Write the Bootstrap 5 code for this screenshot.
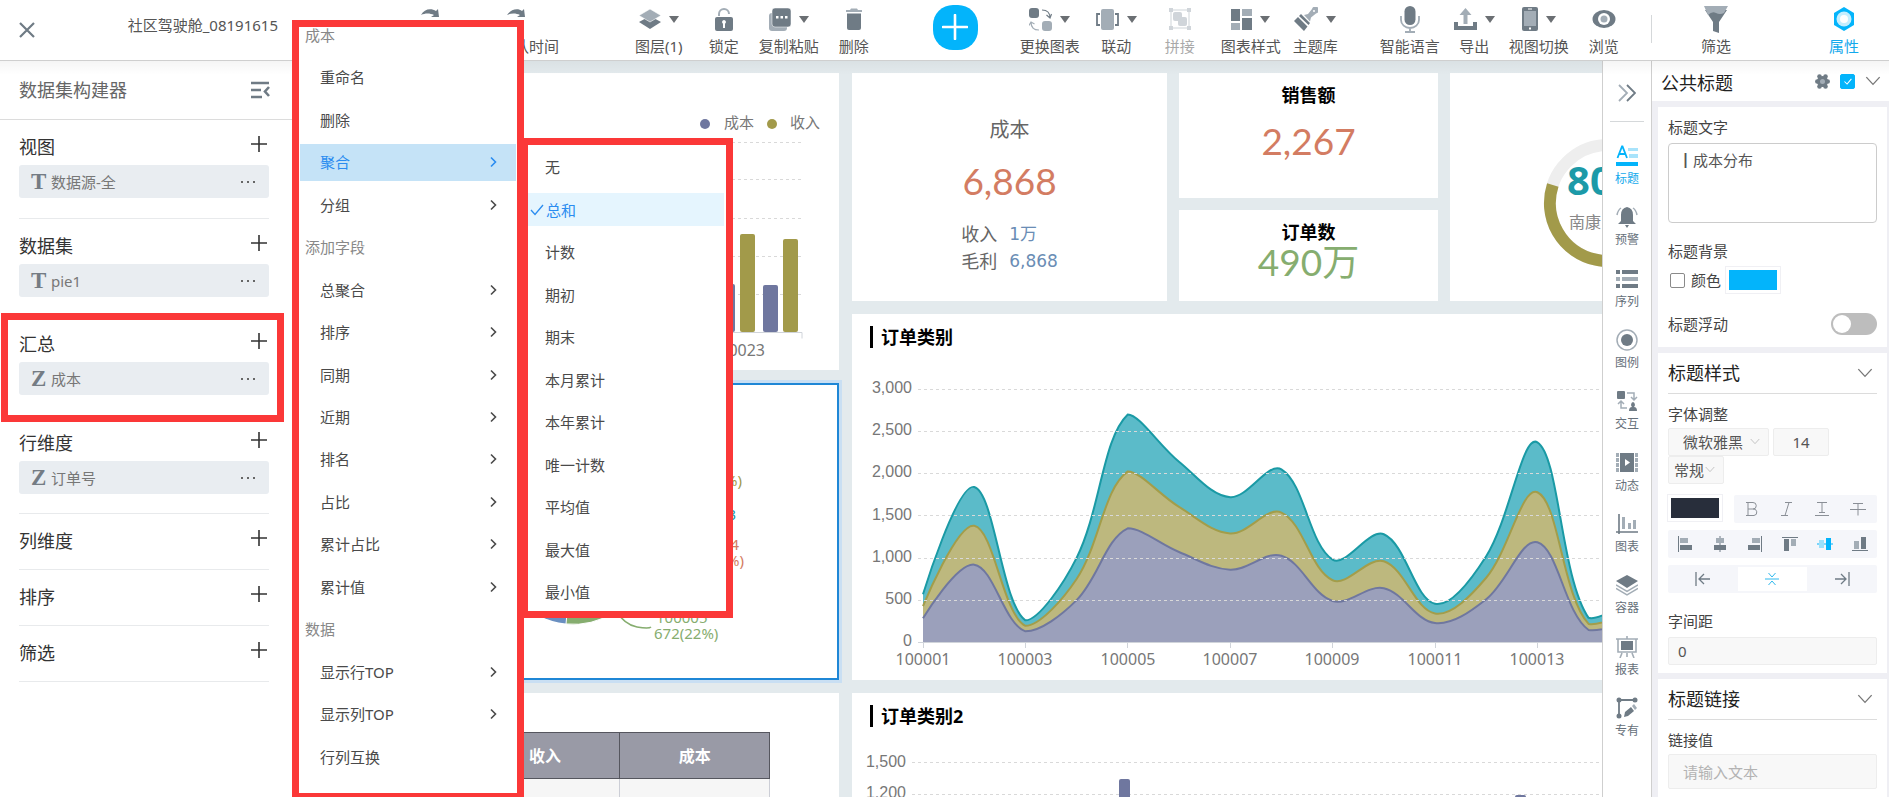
<!DOCTYPE html>
<html lang="zh-CN">
<head>
<meta charset="utf-8">
<meta name="viewport" content="width=device-width, initial-scale=1">
<title>社区驾驶舱_08191615</title>
<link href="https://cdn.jsdelivr.net/npm/bootstrap@5.3.0/dist/css/bootstrap.min.css" rel="stylesheet">
<style>
:root{--dk:#6f7b85;--lt:#a3adb6;--sky:#03b4fb;--red:#fb3838}
body{font:15px/20px "Noto Sans","Noto Sans CJK SC",sans-serif;color:#555;background:#fff;min-width:1200px}
svg{display:block;flex:none}
svg text{font-family:"Noto Sans","Noto Sans CJK SC",sans-serif}
.d{fill:var(--dk)}.l{fill:var(--lt)}
.ds{stroke:var(--dk);fill:none}.ls{stroke:var(--lt);fill:none}
/* top bar */
.topbar{border-bottom:1px solid #cfcfcf;background:#fff}
.brand-box{width:292px;padding:0 14px 0 19px}
.brand-name{padding-bottom:11px}
.plain{border:0;background:none;padding:0;color:inherit;font:inherit;line-height:inherit}
.tool{height:60px;padding-top:3px;min-width:30px;color:#555;white-space:nowrap}
.tool .pic{height:24px;gap:8px;margin-bottom:5px}
.caret{width:0;height:0;border:5px solid transparent;border-top:7px solid #6b6f73;border-bottom:0}
.w40{min-width:40px}
.sp12{margin-left:12px}.sp14{margin-left:14px}.sp16{margin-left:16px}.sp20{margin-left:20px}.sp26{margin-left:26px}.sp28{margin-left:28px}.sp42{margin-left:42px}.sp54{margin-left:54px}.sp64{margin-left:64px}.sp76{margin-left:76px}.sp123{margin-left:123px}
.add{width:45px;height:45px;border-radius:20px;background:var(--sky);margin-bottom:6px}
.side-tools{width:238px;padding:0 30px 0 50px}
.side-tools::before{content:"";position:absolute;left:0;top:15px;height:28px;border-left:1px solid #d5d8da}
.workspace{min-height:0}
.workspace::after{content:"";position:absolute;left:0;right:0;top:0;height:14px;background:linear-gradient(rgba(0,0,0,.04),transparent);pointer-events:none}
/* dataset builder */
.builder{width:292px;color:#333}
.builder-head{height:59px;border-bottom:1px solid #dcdcdc;padding:0 22px 0 19px;font-size:18px;color:#666}
.builder-list{padding:0 23px 0 19px}
.block{border-bottom:1px solid #e8eaec;min-height:56px}
.block .plain{padding:2px 1px 0 0}
.block.filled{min-height:98px}
.block.filled:nth-child(odd){min-height:99px}
.block h3{font-size:18px;line-height:36px;padding-top:9px;margin:0;font-weight:400;color:#333}
.chip{height:33px;background:#e9edf1;border-radius:3px;padding:0 14px 0 12px;color:#777}
.chip b{font:bold 23px/30px "Liberation Serif",serif;width:20px;color:#747c84}
.frame-sum{position:absolute;left:1px;top:313px;width:283px;height:109px;border:7px solid var(--red);pointer-events:none}
/* menus */
.menu{position:absolute;background:#fff;border:7px solid var(--red);list-style:none;margin:0;color:#4a4a4a}
.menu-main{left:292px;top:20px;bottom:0;width:232px;padding:0 1px 15px;border-bottom-width:4px;z-index:3}
.menu-main li{flex:1 1 0;min-height:0}
.menu-main li:first-child{flex:0 0 29px;align-items:flex-start!important}
.menu-main li:first-child span{line-height:16px}
.menu-main span{padding-left:5px;color:#888}
.menu-main button{height:37px;padding:0 19px 0 20px}
.menu-main .on{background:#c5e3f7;color:#2a8cf0}
.menu-sub{left:521px;top:138px;width:212px;height:480px;padding:1px 2px 0 0;z-index:2}
.menu-sub li{height:42px}
.menu-sub li:nth-child(even){height:43px}
.menu-sub button{height:33px;padding-left:17px}
.menu-sub .on{background:#e5f5fe;color:#2a8cf0;padding-left:2px}
/* dashboard */
.canvas{background:#e3eaed;padding:12px 0 0 12px;min-width:0}
.board{display:grid;grid-template-columns:535px 914px;gap:13px;height:100%}
.board-col{display:grid;gap:13px}
.board-left{grid-template-rows:297px 297px minmax(300px,1fr)}
.board-right{grid-template-rows:228px 366px minmax(300px,1fr)}
.tile{background:#fff}
.picked{box-shadow:inset 0 0 0 2px #1f87d6,0 0 0 3px #c9dff3}
.kpis{display:grid;grid-template-columns:315px 259px 1fr;gap:12px;grid-template-rows:125px 91px}
.kpis .tall{grid-row:span 2}
.tile-title{font-size:18px;line-height:20px;font-weight:700;color:#000;margin:0;padding-top:12px}
.big{font:37px/40px Lato,"Noto Sans CJK SC",sans-serif}
.c-red{color:#d37c62}.c-green{color:#86ad6f}.c-blue{color:#6a8db5}
.kpi-name{font-size:20px;line-height:30px;color:#666;margin-top:42px}
.kpi-list{font-size:18px;line-height:27px;color:#666;display:grid;grid-template-columns:auto auto;gap:0 12px;margin:20px 0 0}
.kpi-list dd{font-family:"DejaVu Sans","Noto Sans CJK SC",sans-serif;font-size:17px;margin:0}
.kpi-list dt{font-weight:400}
.bar-title{height:46px;padding-left:18px}
.bar-title h2{border-left:3px solid #000;padding-left:8px;font-size:18px;line-height:22px;font-weight:700;color:#000;margin:0}
.gl{stroke:#d9d9d9;stroke-dasharray:3 3}
.ax{stroke:#d0d4da}
.yl text{font:16px "Liberation Sans",sans-serif;fill:#777;text-anchor:end}
.xl text{font-size:16px;fill:#777;text-anchor:middle}
.grid-table{margin:39px 0 0 16px;border-collapse:collapse;width:450px;table-layout:fixed}
.grid-table th{background:#999aa6;border:1px solid #55565e;color:#fff;font-size:16px;height:46px;text-align:center}
.grid-table td{background:#f6f6f6;border:1px solid #ccced6;height:46px}
/* icon rail */
.rail{width:50px;border:1px solid #cfcfcf;border-width:0 1px;background:#fff}
.rail-top{width:34px;border-bottom:1px solid #d5d8da;margin-bottom:23px}
.rail button{height:61px;font-size:12px;line-height:18px;color:#66707a}
.rail button:nth-child(3n){height:62px}
.rail button svg{margin-bottom:3px}
.rail .rail-top svg{margin:4px 0 0}
.rail .on,.tool.on{color:#13a9ec}
/* properties */
.props{width:237px;background:#efeff4;color:#444;overflow:hidden}
.props-head{height:40px;background:#fff;padding:0 8px 0 9px;color:#222;font-size:18px;margin-bottom:6px}
.props-head span{padding-top:4px}
.props-head .tick{margin:0 10px 0 10px}
.pane{background:#fff;margin:0 2px 6px 6px;padding:0 10px}
.pane h3{font-size:18px;font-weight:400;color:#222;margin:0;line-height:40px}
.pane-head{border-bottom:1px solid #dcdcdc;height:41px}
.lab{display:block;line-height:20px;margin:10px 0 4px}
.lab-first{margin:6px 0}
.lab-far{margin:18px 0 6px}
.field{background:#f8f8f8;border:1px solid #ededed;border-radius:2px;font-size:15px;line-height:20px;color:#555;padding:0 9px;width:100%;height:28px}
.field::placeholder{color:#b3b3b3;opacity:1}
.field.tall-field{height:35px;padding-left:14px}
.field.area{background:#fff;border-color:#ccc;border-radius:4px;height:80px;padding:6px 9px;resize:none;display:block}
.picker{position:relative;width:56px}
.picker.font-pick{width:101px}
.picker select{appearance:none;outline:0;padding:0 5px}
.picker.font-pick select{padding-left:14px}
.picker svg{position:absolute;right:9px;top:10px;pointer-events:none}
.field.size-field{width:56px;padding:0}
.swatch{border:3px solid #fff;box-shadow:0 0 0 1px #f0f0f4;padding:0;height:26px;width:54px}
.swatch.sky{background:#03b4fb}
.swatch.ink{background:#282e3b}
.tick{width:15px;height:15px;margin:0 0 0 2px;border:1px solid #8a8a8a;border-radius:2px;appearance:none}
.tick + label{margin:0 5px 0 6px}
.tick.full{background:var(--sky) url("data:image/svg+xml,%3Csvg xmlns='http://www.w3.org/2000/svg' viewBox='0 0 15 15'%3E%3Cpath d='M4 7.5l3 3 5-6' fill='none' stroke='%23fff' stroke-width='1.2'/%3E%3C/svg%3E");border-color:var(--sky)}
.toggle{appearance:none;width:46px;height:22px;border-radius:11px;background:#bdbdbd;margin:0}
.toggle::before{content:"";display:block;width:18px;height:18px;border-radius:9px;background:#fff;margin:2px}
.strip{background:#f5f6fa;border-radius:2px;height:28px;margin-top:7px}
.strip .mid{background:#fff;height:24px}
.strip.style-strip{width:143px;margin:0}
.style-row{margin-top:11px}
</style>
</head>
<body class="vh-100 d-flex flex-column overflow-hidden position-relative">
<svg width="0" height="0" class="position-absolute" aria-hidden="true">
  <symbol id="plus" viewBox="0 0 18 18"><path d="M9 1v16M1 9h16" stroke="#333" stroke-width="1.6" fill="none"/></symbol>
  <symbol id="dots" viewBox="0 0 14 4"><path d="M0 1h2v2H0zM6 1h2v2H6zM12 1h2v2h-2z" fill="#666"/></symbol>
  <symbol id="gt" viewBox="0 0 7 12"><path d="M1 1.500l4.500 4.500L1 10.500" stroke="currentColor" stroke-width="1.600" fill="none"/></symbol>
  <symbol id="down" viewBox="0 0 14 9"><path d="M1 1l6 6.500L13 1" stroke="currentColor" stroke-width="1.200" fill="none"/></symbol>
</svg>

<header class="topbar d-flex align-items-stretch flex-shrink-0">
  <div class="brand-box d-flex align-items-center justify-content-between flex-shrink-0">
    <button class="plain" aria-label="关闭"><svg width="16" height="16"><path class="ds" stroke-width="2.200" d="M1 1l14 14M15 1L1 15"/></svg></button>
    <div class="brand-name">社区驾驶舱_08191615</div>
  </div>
  <nav class="d-flex flex-fill align-items-center" aria-label="工具栏">
    <button class="plain tool sp123"><span class="pic d-flex justify-content-center"><svg width="20" height="20"><path class="d" d="M1 8C4 2 11 1 16 4l2-2 1 8-8 0 3-2C10 6 5 6 1 8z"/></svg></span>撤销</button>
    <button class="plain tool sp54"><span class="pic d-flex ps-2"><svg width="20" height="20"><path class="d" d="M0 8C4 2 11 1 15 4l2-2 1 8-8 0 3-2C9 6 4 6 0 8z"/></svg></span>默认时间</button>
    <button class="plain tool sp76"><span class="pic d-flex justify-content-center align-items-center"><svg width="22" height="22"><path class="d" d="M0 14l11-6 11 6-11 7z"/><path class="l" stroke="#fff" stroke-width=".6" d="M0 7.500L11 1l11 6.500-11 6.500z"/></svg><i class="caret"></i></span>图层(1)</button>
    <button class="plain tool sp26"><span class="pic d-flex justify-content-center align-items-center"><svg width="20" height="23"><path class="ls" stroke-width="2" d="M5 8V6a5 5 0 0 1 10 0"/><rect class="d" y="9" x="1" width="18" height="14" rx="2"/><path fill="#fff" d="M10 12a2 2 0 0 1 1 3.700V20H9v-4.300A2 2 0 0 1 10 12z"/></svg></span>锁定</button>
    <button class="plain tool sp20"><span class="pic d-flex justify-content-center align-items-center"><svg width="22" height="23"><rect class="l" y="5" width="18" height="18" rx="3"/><rect class="d" x="3" width="19" height="19" rx="3" stroke="#fff" stroke-width=".5"/><path fill="#fff" d="M7 8h2.500v2.500H7zM11.500 8H14v2.500h-2.500zM16 8h2.500v2.500H16z"/></svg><i class="caret"></i></span>复制粘贴</button>
    <button class="plain tool sp20"><span class="pic d-flex justify-content-center align-items-center"><svg width="18" height="23"><path class="l" d="M1 2h4l1-1.500h6L13 2h4v2H1z"/><path class="d" d="M2 5.500h14V20q0 2-2 2H4q-2 0-2-2z"/></svg></span>删除</button>
    <button class="plain add sp64 d-flex align-items-center justify-content-center" aria-label="添加"><svg width="26" height="26"><path d="M13 1v24M1 13h24" stroke="#fff" stroke-width="2.600" stroke-linecap="round"/></svg></button>
    <button class="plain tool sp42"><span class="pic d-flex justify-content-center align-items-center"><svg width="23" height="23"><rect class="d" width="10" height="10" rx="3"/><rect class="l" x="13" y="13" width="10" height="10" rx="3"/><path class="ds" stroke-width="1.200" d="M13 2q8 0 8 8M17.500 7l3.500 3 1.500-4"/><path class="ls" stroke-width="1.200" d="M10 22q-8 0-8-8M0 17.500l2-3.500L5.500 16"/></svg><i class="caret"></i></span>更换图表</button>
    <button class="plain tool w40 sp16"><span class="pic d-flex justify-content-center align-items-center"><svg width="23" height="23"><rect class="l" x="5" y="1" width="13" height="21" rx="2"/><path class="ds" stroke-width="1.800" d="M4 6H1v11h3M19 6h3v11h-3"/></svg><i class="caret"></i></span>联动</button>
    <button class="plain tool sp28 opacity-50" disabled><span class="pic d-flex justify-content-center align-items-center"><svg width="22" height="22"><path class="ls" d="M2 2h18v18H2z"/><path class="l" d="M0 0h4v4H0zM18 0h4v4h-4zM0 18h4v4H0zM18 18h4v4h-4z"/><rect class="l" x="4" y="4" width="9" height="9" rx="2"/><rect class="l" x="9" y="9" width="9" height="9" rx="2"/></svg></span>拼接</button>
    <button class="plain tool sp26"><span class="pic d-flex justify-content-center align-items-center"><svg width="21" height="21"><path class="d" d="M0 0h9v12H0zM11 9h10v12H11z"/><path class="l" d="M11 0h10v7H11zM0 14h9v7H0z"/></svg><i class="caret"></i></span>图表样式</button>
    <button class="plain tool w40 sp12"><span class="pic d-flex justify-content-center align-items-center"><svg width="24" height="24"><path class="l" d="M10 8l4-1 4-5a3.500 3.500 0 1 1 4 4.500l-5 4-1 4z"/><path class="d" d="M7 7l9 9-1.500 2L5 9zM4 10l9.500 9.500L10 24 0 14z"/><circle cx="20" cy="4" r="1" fill="#fff"/></svg><i class="caret"></i></span>主题库</button>
    <button class="plain tool sp42"><span class="pic d-flex justify-content-center align-items-center"><svg width="20" height="27"><rect class="d" x="4.500" width="11" height="19" rx="5.500"/><path class="ls" stroke-width="1.800" d="M1 10v4a9 8 0 0 0 18 0v-4M10 22v4M5 26h10"/></svg></span>智能语言</button>
    <button class="plain tool w40 sp14"><span class="pic d-flex justify-content-center align-items-center"><svg width="23" height="22"><path class="l" d="M11.500 0l6 7h-4v9h-4V7h-4z"/><path class="d" d="M0 14h4v4h15v-4h4v8H0z"/></svg><i class="caret"></i></span>导出</button>
    <button class="plain tool sp14"><span class="pic d-flex justify-content-center align-items-center"><svg width="16" height="24"><rect class="d" width="16" height="24" rx="2"/><path class="l" d="M2 4h12v15H2z"/><path fill="#fff" d="M6 1.500h4v1H6zM7 20.500h2v2H7z"/></svg><i class="caret"></i></span>视图切换</button>
    <button class="plain tool sp20"><span class="pic d-flex justify-content-center align-items-center"><svg width="24" height="20"><ellipse class="d" cx="12" cy="10" rx="11.500" ry="9"/><circle cx="12" cy="10" r="6" fill="#fff"/><circle class="l" cx="12" cy="10" r="3.500"/></svg></span>浏览</button>
  </nav>
  <div class="side-tools d-flex justify-content-between align-items-center position-relative flex-shrink-0">
    <button class="plain tool"><span class="pic d-flex justify-content-center align-items-center"><svg width="24" height="27"><path class="d" d="M1 4l8 12v9l6 2V16l8-12z"/><path class="l" d="M0 0h24l-4 7q-4 2-8 0t-8 2z"/></svg></span>筛选</button>
    <button class="plain tool on"><span class="pic d-flex justify-content-center align-items-center"><svg width="22" height="24"><path fill="#03b4fb" d="M11 0l10 6v12l-10 6-10-6V6z"/><circle cx="11" cy="12" r="7.500" fill="#c5eefe"/><circle cx="11" cy="12" r="4" fill="#fff"/></svg></span>属性</button>
  </div>
</header>

<div class="workspace d-flex flex-fill position-relative">
  <aside class="builder flex-shrink-0">
    <div class="builder-head d-flex align-items-center justify-content-between">数据集构建器
      <button class="plain" aria-label="收起"><svg width="19" height="18"><path class="ds" stroke-width="2.600" d="M0 2h18M0 9h10M0 16h11M18 6l-4 4.500 4 4.500"/></svg></button></div>
    <div class="builder-list">
      <section class="block filled"><div class="d-flex justify-content-between align-items-center"><h3>视图</h3><button class="plain" aria-label="添加视图"><svg width="18" height="18"><use href="#plus"/></svg></button></div><div class="chip d-flex align-items-center"><b>T</b><span class="flex-fill">数据源-全</span><svg width="14" height="4"><use href="#dots"/></svg></div></section>
      <section class="block filled"><div class="d-flex justify-content-between align-items-center"><h3>数据集</h3><button class="plain" aria-label="添加数据集"><svg width="18" height="18"><use href="#plus"/></svg></button></div><div class="chip d-flex align-items-center"><b>T</b><span class="flex-fill">pie1</span><svg width="14" height="4"><use href="#dots"/></svg></div></section>
      <section class="block filled"><div class="d-flex justify-content-between align-items-center"><h3>汇总</h3><button class="plain" aria-label="添加汇总"><svg width="18" height="18"><use href="#plus"/></svg></button></div><div class="chip d-flex align-items-center"><b>Z</b><span class="flex-fill">成本</span><svg width="14" height="4"><use href="#dots"/></svg></div></section>
      <section class="block filled"><div class="d-flex justify-content-between align-items-center"><h3>行维度</h3><button class="plain" aria-label="添加行维度"><svg width="18" height="18"><use href="#plus"/></svg></button></div><div class="chip d-flex align-items-center"><b>Z</b><span class="flex-fill">订单号</span><svg width="14" height="4"><use href="#dots"/></svg></div></section>
      <section class="block"><div class="d-flex justify-content-between align-items-center"><h3>列维度</h3><button class="plain" aria-label="添加列维度"><svg width="18" height="18"><use href="#plus"/></svg></button></div></section>
      <section class="block"><div class="d-flex justify-content-between align-items-center"><h3>排序</h3><button class="plain" aria-label="添加排序"><svg width="18" height="18"><use href="#plus"/></svg></button></div></section>
      <section class="block"><div class="d-flex justify-content-between align-items-center"><h3>筛选</h3><button class="plain" aria-label="添加筛选"><svg width="18" height="18"><use href="#plus"/></svg></button></div></section>
    </div>
  </aside>

  <main class="canvas flex-fill overflow-hidden">
    <div class="board">
      <div class="board-col board-left">
        <div class="tile">
          <svg width="535" height="297" role="img" aria-label="成本与收入柱状图">
            <circle cx="401" cy="51" r="5" fill="#6f779f"/><circle cx="468" cy="51" r="5" fill="#a29a4a"/>
            <g font-size="15" fill="#777"><text x="420" y="55">成本</text><text x="486" y="55">收入</text></g>
            <path class="gl" d="M20 69.500h478M20 106.500h478M20 145.500h478M20 183.500h478M20 221.500h478"/>
            <path class="ax" fill="none" d="M20 259.500h478v6"/>
            <g fill="#6f779f"><rect x="416" y="211" width="15" height="48" rx="2"/><rect x="459" y="212" width="15" height="47" rx="2"/></g>
            <g fill="#a29a4a"><rect x="436" y="161" width="15" height="98" rx="2"/><rect x="479" y="166" width="15" height="93" rx="2"/></g>
            <text x="461" y="283" font-size="16" fill="#777" text-anchor="end">100023</text>
          </svg>
        </div>
        <div class="tile picked">
          <svg width="535" height="297" font-size="15" role="img" aria-label="成本分布饼图">
            <circle cx="269" cy="167" r="74" fill="#6a8fc0"/><path fill="#86ad6f" stroke="#fff" d="M269 167L262 241A74 74 0 0 0 340 190z"/>
            <path d="M311 227q10 15 22 17t14 0" fill="none" stroke="#86ad6f" stroke-width="1.500"/>
            <g text-anchor="end"><text x="438" y="103" fill="#a29a4a">(18%)</text><text x="432" y="137" fill="#1c9aa8">100003</text><text x="435" y="167" fill="#d37c62">100004</text><text x="440" y="183" fill="#d37c62">(16%)</text></g>
            <g fill="#86ad6f"><text x="352" y="240">100005</text><text x="350" y="256">672(22%)</text></g>
          </svg>
        </div>
        <div class="tile overflow-hidden">
          <table class="grid-table"><thead><tr><th>订单号</th><th>收入</th><th>成本</th></tr></thead><tbody><tr><td></td><td></td><td></td></tr></tbody></table>
        </div>
      </div>
      <div class="board-col board-right">
        <div class="kpis">
          <div class="tile tall d-flex flex-column align-items-center">
            <div class="kpi-name">成本</div>
            <div class="big c-red mt-3">6,868</div>
            <dl class="kpi-list"><dt>收入</dt><dd class="c-blue">1万</dd><dt>毛利</dt><dd class="c-blue">6,868</dd></dl>
          </div>
          <div class="tile text-center"><h2 class="tile-title">销售额</h2><div class="big c-red mt-3">2,267</div></div>
          <div class="tile tall">
            <svg width="316" height="228" role="img" aria-label="完成率 80%">
              <circle cx="158" cy="130" r="58" fill="none" stroke="#eee" stroke-width="12"/>
              <path d="M158 72A58 58 0 1 1 102.800 112" fill="none" stroke="#a29a4a" stroke-width="12"/>
              <text x="117" y="122" font-size="40" font-weight="700" fill="#1c9aa8">80%</text>
              <text x="119" y="155" font-size="16" fill="#888">南康</text>
            </svg>
          </div>
          <div class="tile text-center"><h2 class="tile-title">订单数</h2><div class="big c-green">490万</div></div>
        </div>
        <div class="tile">
          <div class="bar-title d-flex align-items-center"><h2>订单类别</h2></div>
          <svg width="914" height="320" role="img" aria-label="订单类别面积图">
            <g id="areas"></g>
            <path class="gl" d="M66 29.500h848M66 71.500h848M66 113.500h848M66 155.500h848M66 198.500h848M66 240.500h848"/>
            <path class="ax" fill="none" d="M66 282.500h848M71.500 282v6M173.500 282v6M275.500 282v6M378.500 282v6M480.500 282v6M583.500 282v6M685.500 282v6"/>
            <g class="yl"><text x="60" y="33">3,000</text><text x="60" y="75">2,500</text><text x="60" y="117">2,000</text><text x="60" y="160">1,500</text><text x="60" y="202">1,000</text><text x="60" y="244">500</text><text x="60" y="286">0</text></g>
            <g class="xl"><text x="71" y="305">100001</text><text x="173" y="305">100003</text><text x="276" y="305">100005</text><text x="378" y="305">100007</text><text x="480" y="305">100009</text><text x="583" y="305">100011</text><text x="685" y="305">100013</text></g>
          </svg>
        </div>
        <div class="tile">
          <div class="bar-title d-flex align-items-center"><h2>订单类别2</h2></div>
          <svg width="914" height="240" role="img" aria-label="订单类别柱状图">
            <path class="gl" d="M60 23.500h854M60 55.500h854"/>
            <g class="yl"><text x="54" y="28">1,500</text><text x="54" y="59">1,200</text></g>
            <g fill="#6f779f"><rect x="267" y="40" width="11" height="200" rx="2"/><rect x="663" y="56" width="11" height="184" rx="2"/></g>
          </svg>
        </div>
      </div>
    </div>
  </main>

  <nav class="rail d-flex flex-column align-items-center flex-shrink-0" aria-label="属性分类">
    <button class="plain rail-top d-flex justify-content-center align-items-center" aria-label="展开"><svg width="18" height="18" stroke-width="1.800"><path class="ls" d="M1 1l8 8-8 8"/><path class="ds" d="M9 1l8 8-8 8"/></svg></button>
    <button class="plain on d-flex flex-column align-items-center"><svg width="22" height="22"><path d="M1.500 13L6 1.500h.500L11 13M3 9h7" fill="none" stroke="#03b4fb" stroke-width="1.800"/><path fill="#a8e3fb" d="M12 3h10v3H12zM13 9h9v4h-9z"/><path fill="#03b4fb" d="M0 17h22v4H0z"/></svg>标题</button>
    <button class="plain d-flex flex-column align-items-center"><svg width="22" height="22"><path class="d" d="M11 1q6 1 6 8v6l3 3H2l3-3V9q0-7 6-8zM9 19h4l-2 3z"/><path class="ls" stroke-width="1.500" d="M5 2Q2 4 1 9M17 2q3 2 4 7"/></svg>预警</button>
    <button class="plain d-flex flex-column align-items-center"><svg width="22" height="22"><path class="d" d="M0 2h4v4H0zM6 2h16v4H6zM0 16h4v4H0zM6 16h16v4H6z"/><path class="l" d="M0 9h4v4H0zM6 9h16v4H6z"/></svg>序列</button>
    <button class="plain d-flex flex-column align-items-center"><svg width="22" height="22"><circle class="ls" stroke-width="1.500" cx="11" cy="11" r="10"/><circle class="d" cx="11" cy="11" r="6"/></svg>图例</button>
    <button class="plain d-flex flex-column align-items-center"><svg width="22" height="22"><rect class="d" x="1" y="1" width="8" height="8" rx="1"/><path class="ls" stroke-width="1.500" d="M11 3h7v6M15 7l3 3 3-3M11 18H5v-6M2 14l3-3 3 3"/><path class="d" d="M17 12a3 3 0 0 1 1 5q3 0 3 4h-8q0-4 3-4a3 3 0 0 1 1-5z"/></svg>交互</button>
    <button class="plain d-flex flex-column align-items-center"><svg width="22" height="22"><path class="l" d="M0 1h3v4H0zM0 6h3v4H0zM0 11h3v4H0zM0 16h3v4H0zM19 1h3v4h-3zM19 6h3v4h-3zM19 11h3v4h-3zM19 16h3v4h-3z"/><path class="d" d="M4 1h14v19H4z"/><path fill="#fff" d="M9 7l5 3.500L9 14z"/></svg>动态</button>
    <button class="plain d-flex flex-column align-items-center"><svg width="22" height="22"><path class="ds" stroke-width="1.600" d="M3 1v20M0 19h22"/><path class="l" d="M6 4h3v12H6zM12 10h3v6h-3zM17 7h3v9h-3z"/></svg>图表</button>
    <button class="plain d-flex flex-column align-items-center"><svg width="22" height="22"><path class="d" d="M11 1l11 6-11 7L0 7z"/><path class="ls" stroke-width="1.500" d="M0 11l11 6.500L22 11M0 14.500L11 21l11-6.500"/></svg>容器</button>
    <button class="plain d-flex flex-column align-items-center"><svg width="22" height="22"><path class="ls" stroke-width="1.600" d="M2 3h18v13H2zM0 3h22M11 0v3M6 17l-2 5M16 17l2 5M11 17v4"/><path class="d" d="M5 5h12v9H5z"/></svg>报表</button>
    <button class="plain d-flex flex-column align-items-center"><svg width="22" height="22"><path class="ds" stroke-width="1.800" d="M3 3h16M3 3v16"/><circle class="d" cx="3" cy="3" r="2.500"/><circle class="d" cx="19" cy="3" r="2.500"/><circle class="d" cx="3" cy="19" r="2.500"/><path class="d" d="M8 20l1-5 6-5 3 4-6 5z"/><path class="l" d="M16 9l2-2 3 4-2 2z"/></svg>专有</button>
  </nav>

  <aside class="props flex-shrink-0">
    <div class="props-head d-flex align-items-center">
      <span class="flex-fill">公共标题</span>
      <svg width="15" height="15"><g class="d"><circle cx="7.500" cy="7.500" r="5.500"/><circle cx="4.500" cy="2.500" r="2.300"/><circle cx="10.500" cy="2.500" r="2.300"/><circle cx="2.300" cy="7.500" r="2.300"/><circle cx="12.700" cy="7.500" r="2.300"/><circle cx="4.500" cy="12.500" r="2.300"/><circle cx="10.500" cy="12.500" r="2.300"/></g><circle cx="7.500" cy="7.500" r="2.500" fill="#a3adb6"/></svg>
      <input type="checkbox" class="tick full" checked aria-label="启用公共标题">
      <svg width="16" height="10" color="#777"><use href="#down"/></svg>
    </div>
    <section class="pane pt-1 pb-1">
      <label class="lab lab-first" for="ttl">标题文字</label>
      <textarea class="field area" id="ttl">┃成本分布</textarea>
      <div class="lab lab-far">标题背景</div>
      <div class="d-flex align-items-center">
        <input type="checkbox" class="tick" id="bgc"><label for="bgc">颜色</label>
        <button class="swatch sky" aria-label="背景颜色"></button>
      </div>
      <div class="d-flex align-items-center justify-content-between mt-3 pt-1 pb-2"><label for="flt">标题浮动</label><input type="checkbox" role="switch" class="toggle" id="flt"></div>
    </section>
    <section class="pane pb-2">
      <div class="pane-head d-flex align-items-center justify-content-between"><h3>标题样式</h3><svg width="16" height="10" color="#777" class="me-1"><use href="#down"/></svg></div>
      <div class="lab">字体调整</div>
      <div class="d-flex flex-wrap">
        <div class="picker font-pick me-1"><select class="field" aria-label="字体"><option>微软雅黑</option></select><svg width="10" height="7" color="#bbb"><use href="#down"/></svg></div>
        <input class="field size-field text-center" value="14" aria-label="字号">
        <div class="picker"><select class="field" aria-label="字重"><option>常规</option></select><svg width="10" height="7" color="#bbb"><use href="#down"/></svg></div>
      </div>
      <div class="style-row d-flex justify-content-between">
        <button class="swatch ink" aria-label="文字颜色"></button>
        <div class="strip style-strip d-flex justify-content-around align-items-center">
          <button class="plain" aria-label="加粗"><svg width="14" height="16"><path d="M1 1.500h7a3.200 3.200 0 0 1 0 6.500H3M3 1.500v13M8 8a3.200 3.200 0 0 1 1 6.500H1" fill="none" stroke="#8a8f96"/></svg></button>
          <button class="plain" aria-label="斜体"><svg width="14" height="16"><path d="M5 1.500h7M1 14.500h7M9 1.500l-4 13" fill="none" stroke="#8a8f96"/></svg></button>
          <button class="plain" aria-label="下划线"><svg width="14" height="16"><path d="M2 1.500h10M7 1.500v10M4 11.500h6M0 14.500h14" fill="none" stroke="#8a8f96"/></svg></button>
          <button class="plain" aria-label="删除线"><svg width="16" height="16"><path d="M3 2.500h10M8 2.500v12M0 8.500h16" fill="none" stroke="#8a8f96"/></svg></button>
        </div>
      </div>
      <div class="strip d-flex justify-content-around align-items-center">
        <button class="plain" aria-label="左对齐"><svg width="16" height="16"><path class="ds" d="M1.500 0v16"/><path class="l" d="M3 2h8v5H3z"/><path class="d" d="M3 9h12v5H3z"/></svg></button>
        <button class="plain" aria-label="居中"><svg width="16" height="16"><path class="ds" d="M8 0v16"/><path class="l" d="M4 2h8v5H4z"/><path class="d" d="M2 9h12v5H2z"/></svg></button>
        <button class="plain" aria-label="右对齐"><svg width="16" height="16"><path class="ds" d="M14.500 0v16"/><path class="l" d="M5 2h8v5H5z"/><path class="d" d="M1 9h12v5H1z"/></svg></button>
        <button class="plain" aria-label="顶对齐"><svg width="16" height="16"><path class="ds" d="M0 1.500h16"/><path class="d" d="M2 3h5v12H2z"/><path class="l" d="M9 3h5v7H9z"/></svg></button>
        <button class="plain" aria-label="垂直居中"><svg width="16" height="16"><path stroke="#03b4fb" d="M0 8h16"/><path fill="#9be0fb" d="M2 4h5v8H2z"/><path fill="#03b4fb" d="M9 2h5v12H9z"/></svg></button>
        <button class="plain" aria-label="底对齐"><svg width="16" height="16"><path class="ds" d="M0 14.500h16"/><path class="l" d="M2 5h5v8H2z"/><path class="d" d="M9 1h5v12H9z"/></svg></button>
      </div>
      <div class="strip d-flex align-items-center">
        <button class="plain flex-fill d-flex justify-content-center" aria-label="靠左"><svg width="16" height="14"><path class="ds" stroke-width="1.300" d="M1 0v14M15 7H4M9 2L4 7l5 5"/></svg></button>
        <button class="plain flex-fill d-flex justify-content-center align-items-center mid" aria-label="靠中"><svg width="14" height="14" fill="none" stroke="#2fb9ee"><path d="M0 7h14M3.500 1L7 5l3.500-4M3.500 13L7 9l3.500 4"/></svg></button>
        <button class="plain flex-fill d-flex justify-content-center" aria-label="靠右"><svg width="16" height="14"><path class="ds" stroke-width="1.300" d="M15 0v14M1 7h11M7 2l5 5-5 5"/></svg></button>
      </div>
      <label class="lab lab-far" for="gap">字间距</label>
      <input class="field" id="gap" value="0">
    </section>
    <section class="pane">
      <div class="pane-head d-flex align-items-center justify-content-between"><h3>标题链接</h3><svg width="16" height="10" color="#777" class="me-1"><use href="#down"/></svg></div>
      <label class="lab" for="lnk">链接值</label>
      <input class="field tall-field" id="lnk" placeholder="请输入文本">
      <div class="py-3"></div>
    </section>
  </aside>
</div>

<div class="frame-sum"></div>
<ul class="menu menu-main d-flex flex-column">
  <li class="d-flex align-items-center"><span>成本</span></li>
  <li class="d-flex align-items-center"><button class="plain w-100 text-start">重命名</button></li>
  <li class="d-flex align-items-center"><button class="plain w-100 text-start">删除</button></li>
  <li class="d-flex align-items-center"><button class="plain on w-100 d-flex align-items-center justify-content-between">聚合<svg width="7" height="12"><use href="#gt"/></svg></button></li>
  <li class="d-flex align-items-center"><button class="plain w-100 d-flex align-items-center justify-content-between">分组<svg width="7" height="12"><use href="#gt"/></svg></button></li>
  <li class="d-flex align-items-center"><span>添加字段</span></li>
  <li class="d-flex align-items-center"><button class="plain w-100 d-flex align-items-center justify-content-between">总聚合<svg width="7" height="12"><use href="#gt"/></svg></button></li>
  <li class="d-flex align-items-center"><button class="plain w-100 d-flex align-items-center justify-content-between">排序<svg width="7" height="12"><use href="#gt"/></svg></button></li>
  <li class="d-flex align-items-center"><button class="plain w-100 d-flex align-items-center justify-content-between">同期<svg width="7" height="12"><use href="#gt"/></svg></button></li>
  <li class="d-flex align-items-center"><button class="plain w-100 d-flex align-items-center justify-content-between">近期<svg width="7" height="12"><use href="#gt"/></svg></button></li>
  <li class="d-flex align-items-center"><button class="plain w-100 d-flex align-items-center justify-content-between">排名<svg width="7" height="12"><use href="#gt"/></svg></button></li>
  <li class="d-flex align-items-center"><button class="plain w-100 d-flex align-items-center justify-content-between">占比<svg width="7" height="12"><use href="#gt"/></svg></button></li>
  <li class="d-flex align-items-center"><button class="plain w-100 d-flex align-items-center justify-content-between">累计占比<svg width="7" height="12"><use href="#gt"/></svg></button></li>
  <li class="d-flex align-items-center"><button class="plain w-100 d-flex align-items-center justify-content-between">累计值<svg width="7" height="12"><use href="#gt"/></svg></button></li>
  <li class="d-flex align-items-center"><span>数据</span></li>
  <li class="d-flex align-items-center"><button class="plain w-100 d-flex align-items-center justify-content-between">显示行TOP<svg width="7" height="12"><use href="#gt"/></svg></button></li>
  <li class="d-flex align-items-center"><button class="plain w-100 d-flex align-items-center justify-content-between">显示列TOP<svg width="7" height="12"><use href="#gt"/></svg></button></li>
  <li class="d-flex align-items-center"><button class="plain w-100 text-start">行列互换</button></li>
</ul>
<ul class="menu menu-sub">
  <li class="d-flex align-items-center"><button class="plain w-100 text-start">无</button></li>
  <li class="d-flex align-items-center"><button class="plain on w-100 d-flex align-items-center"><svg width="16" height="12"><path d="M1 6l4 4.500L13 1" fill="none" stroke="currentColor" stroke-width="1.300"/></svg>总和</button></li>
  <li class="d-flex align-items-center"><button class="plain w-100 text-start">计数</button></li>
  <li class="d-flex align-items-center"><button class="plain w-100 text-start">期初</button></li>
  <li class="d-flex align-items-center"><button class="plain w-100 text-start">期末</button></li>
  <li class="d-flex align-items-center"><button class="plain w-100 text-start">本月累计</button></li>
  <li class="d-flex align-items-center"><button class="plain w-100 text-start">本年累计</button></li>
  <li class="d-flex align-items-center"><button class="plain w-100 text-start">唯一计数</button></li>
  <li class="d-flex align-items-center"><button class="plain w-100 text-start">平均值</button></li>
  <li class="d-flex align-items-center"><button class="plain w-100 text-start">最大值</button></li>
  <li class="d-flex align-items-center"><button class="plain w-100 text-start">最小值</button></li>
</ul>

<script src="https://cdn.jsdelivr.net/npm/bootstrap@5.3.0/dist/js/bootstrap.bundle.min.js"></script>
<script>
// Stacked smooth areas: each layer is the base series times its factor.
const base = [285, 920, 130, 500, 1350, 1070, 860, 1025, 490, 640, 228, 510, 1185, 145, 300, 700, 500];
const layers = [[2, '#5bbbc9', '#1a9aa5'], [1.5, '#bdb87e', '#a39d4a'], [1, '#9ba0bb', '#6f779f']];
const SMOOTH = 0.36;
function curve(p) {
  const ys = p.map(q => q[1]), lo = Math.min(...ys), hi = Math.max(...ys);
  const fit = (x, y) => [x, Math.max(lo, Math.min(hi, y))];
  let d = `M${p[0]}`, c = p[0];
  for (let i = 1; i < p.length; i++) {
    const q = p[i - 1], r = p[i], n = p[i + 1];
    if (!n) { d += `C${c} ${r} ${r}`; break; }
    const l0 = Math.hypot(r[0] - q[0], r[1] - q[1]), l1 = Math.hypot(n[0] - r[0], n[1] - r[1]);
    const a = SMOOTH * l0 / (l0 + l1), b = SMOOTH * l1 / (l0 + l1);
    const vx = n[0] - q[0], vy = n[1] - q[1];
    d += `C${c} ${fit(r[0] - vx * a, r[1] - vy * a)} ${r}`;
    c = fit(r[0] + vx * b, r[1] + vy * b);
  }
  return d;
}
document.getElementById('areas').innerHTML = layers.map(([f, fill, line]) => {
  const pts = base.map((v, i) => [71 + i * 51.2, 282.3 - v * f * 0.0844]);
  const d = curve(pts);
  return `<path d="${d}V282H71z" fill="${fill}"/><path d="${d}" fill="none" stroke="${line}" stroke-width="2"/>`;
}).join('');
</script>
</body>
</html>
